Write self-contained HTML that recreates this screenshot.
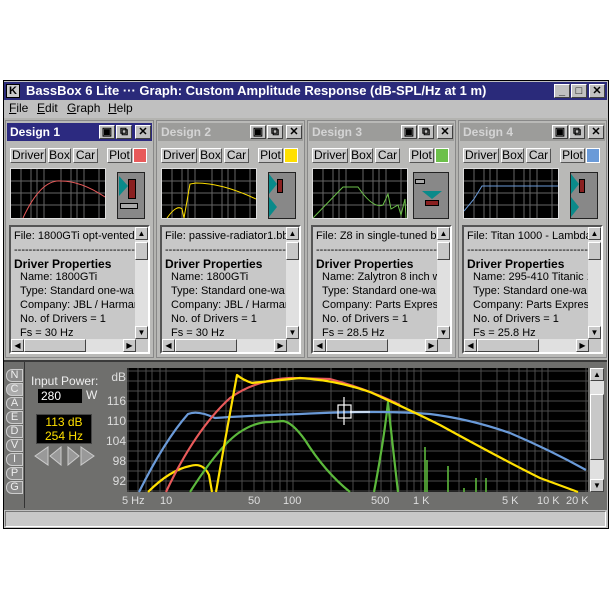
<!DOCTYPE html><html><head><style>
*{margin:0;padding:0;box-sizing:border-box}
body{width:611px;height:611px;background:#fff;position:relative;overflow:hidden;font-family:"Liberation Sans",sans-serif}
.a{position:absolute}
.win{left:3px;top:80px;width:606px;height:449px;background:#c0c0c0;border:1px solid #000}
.title{left:4px;top:82px;width:603px;height:18px;background:#2a2a7a;color:#fff;font-weight:bold;font-size:13px;line-height:18px;padding-left:22px}
.tb{width:16px;height:14px;background:#c0c0c0;border:1px solid;border-color:#fff #404040 #404040 #fff;color:#000;font-size:11px;text-align:center;line-height:12px;font-weight:bold}
.menu{top:101px;font-size:12px}
.panel{top:120px;width:149px;height:238px;background:#b9b9b7;border:1px solid #888}
.hdr{left:1px;top:2px;width:145px;height:18px;font-weight:bold;font-size:12px;line-height:18px;padding-left:3px}
.btn{top:27px;height:15px;background:#c8c8c8;border:1px solid;border-color:#fff #555 #555 #fff;font-size:12px;line-height:13px;text-align:center}
.sw{top:27px;left:127px;width:14px;height:15px;border:1px solid #fff}
.mg{left:4px;top:47px;width:96px;height:51px;background:#000;border:1px solid #ddd}
.spk{left:111px;top:51px;width:28px;height:47px;background:#888;border:1px solid #222}
.txt{left:3px;top:104px;width:141px;height:129px;background:#c8c8c8;border:2px solid;border-color:#555 #fff #fff #555;font-size:11px;overflow:hidden;white-space:nowrap}
.l{position:absolute;left:3px}
.i{left:9px}
.vs{right:0;top:0;width:13px;height:112px;background:#e0e0e0}
.hs{left:0;bottom:0;width:125px;height:13px;background:#e0e0e0}
.sb{width:13px;height:13px;background:#c8c8c8;border:1px solid;border-color:#fff #444 #444 #fff;font-size:8px;text-align:center;line-height:11px}
.lt{left:6px;width:17px;height:13px;background:#8a8a8a;border:1px solid #ccc;border-radius:6px 0 0 6px;color:#eee;font-size:11px;text-align:center;line-height:11px}
.yl{color:#ddd;font-size:12px;left:104px;width:22px;text-align:right}
.xl{color:#ddd;font-size:11px;top:495px}
</style></head><body>
<div class="a win"></div>
<div class="a title">BassBox 6 Lite ··· Graph: Custom Amplitude Response (dB-SPL/Hz at 1 m)</div>
<div class="a" style="left:6px;top:84px;width:14px;height:14px;background:#ccc;border:1px solid #000;font-size:11px;font-weight:bold;line-height:12px;text-align:center">K</div>
<div class="a tb" style="left:554px;top:84px">_</div><div class="a tb" style="left:571px;top:84px">□</div><div class="a tb" style="left:589px;top:84px">✕</div>
<div class="a menu" style="left:9px"><u>F</u>ile</div><div class="a menu" style="left:37px"><u>E</u>dit</div><div class="a menu" style="left:67px"><u>G</u>raph</div><div class="a menu" style="left:108px"><u>H</u>elp</div>
<div class="a" style="left:4px;top:118px;width:603px;height:242px;background:#b3b3b0"></div>

<div class="a panel" style="left:5px">
<div class="a hdr" style="background:#2c2a80;color:#fff">Design 1</div>
<div class="a tb" style="left:93px;top:4px">▣</div><div class="a tb" style="left:110px;top:4px">⧉</div><div class="a tb" style="left:129px;top:4px">✕</div>
<div class="a btn" style="left:4px;width:36px">Driver</div><div class="a btn" style="left:42px;width:23px">Box</div><div class="a btn" style="left:67px;width:25px">Car</div><div class="a btn" style="left:101px;width:25px">Plot</div>
<div class="a sw" style="background:#e85a5a"></div>
<div class="a mg"><svg width="94" height="49"><g stroke="#666" stroke-width="1"><path d="M0 12H94M0 24H94M0 36H94M10 0V49M20 0V49M26 0V49M33 0V49M50 0V49M60 0V49M66 0V49M73 0V49M88 0V49"/></g><path d="M12 49 Q30 10 50 12 Q70 12 94 28" stroke="#e85a5a" fill="none"/></svg></div>
<div class="a spk"><div class="a" style="left:10px;top:6px;width:8px;height:20px;background:#8a2020;border:1px solid #000"></div><div class="a" style="left:1px;top:3px;border-left:9px solid #0a8a8a;border-top:10px solid transparent;border-bottom:10px solid transparent"></div><div class="a" style="left:2px;top:30px;width:18px;height:6px;background:#aaa;border:1px solid #000"></div></div>
<div class="a txt"><div class="l" style="top:3px">File: 1800GTi opt-vented.bb6</div><div class="l" style="top:17px">---------------------------------</div><div class="l" style="top:30px;font-weight:bold;font-size:12px">Driver Properties</div><div class="l i" style="top:44px">Name: 1800GTi</div><div class="l i" style="top:58px">Type: Standard one-wa</div><div class="l i" style="top:72px">Company: JBL / Harman</div><div class="l i" style="top:86px">No. of Drivers = 1</div><div class="l i" style="top:100px">Fs =  30 Hz</div>
<div class="a vs"><div class="a sb" style="top:0">▲</div><div class="a sb" style="top:15px;height:18px"></div><div class="a sb" style="bottom:0">▼</div></div><div class="a hs"><div class="a sb" style="left:0">◀</div><div class="a sb" style="left:13px;width:62px"></div><div class="a sb" style="right:0">▶</div></div></div>
</div>

<div class="a panel" style="left:156px">
<div class="a hdr" style="background:#9c9c9a;color:#d4d4d4">Design 2</div>
<div class="a tb" style="left:93px;top:4px">▣</div><div class="a tb" style="left:110px;top:4px">⧉</div><div class="a tb" style="left:129px;top:4px">✕</div>
<div class="a btn" style="left:4px;width:36px">Driver</div><div class="a btn" style="left:42px;width:23px">Box</div><div class="a btn" style="left:67px;width:25px">Car</div><div class="a btn" style="left:101px;width:25px">Plot</div>
<div class="a sw" style="background:#ffe000"></div>
<div class="a mg"><svg width="94" height="49"><g stroke="#666"><path d="M0 12H94M0 24H94M0 36H94M10 0V49M20 0V49M26 0V49M33 0V49M50 0V49M60 0V49M66 0V49M73 0V49M88 0V49"/></g><path d="M5 49 Q15 35 20 40 L22 49 L28 15 L34 14 Q60 14 94 30" stroke="#ffe000" fill="none"/></svg></div>
<div class="a spk"><div class="a" style="left:8px;top:6px;width:6px;height:14px;background:#8a2020;border:1px solid #000"></div><div class="a" style="left:0;top:1px;border-left:8px solid #0a8a8a;border-top:10px solid transparent;border-bottom:10px solid transparent"></div><div class="a" style="left:0;top:24px;border-left:8px solid #0a8a8a;border-top:10px solid transparent;border-bottom:10px solid transparent"></div></div>
<div class="a txt"><div class="l" style="top:3px">File: passive-radiator1.bb6</div><div class="l" style="top:17px">---------------------------------</div><div class="l" style="top:30px;font-weight:bold;font-size:12px">Driver Properties</div><div class="l i" style="top:44px">Name: 1800GTi</div><div class="l i" style="top:58px">Type: Standard one-wa</div><div class="l i" style="top:72px">Company: JBL / Harman</div><div class="l i" style="top:86px">No. of Drivers = 1</div><div class="l i" style="top:100px">Fs =  30 Hz</div>
<div class="a vs"><div class="a sb" style="top:0">▲</div><div class="a sb" style="top:15px;height:18px"></div><div class="a sb" style="bottom:0">▼</div></div><div class="a hs"><div class="a sb" style="left:0">◀</div><div class="a sb" style="left:13px;width:62px"></div><div class="a sb" style="right:0">▶</div></div></div>
</div>

<div class="a panel" style="left:307px">
<div class="a hdr" style="background:#9c9c9a;color:#d4d4d4">Design 3</div>
<div class="a tb" style="left:93px;top:4px">▣</div><div class="a tb" style="left:110px;top:4px">⧉</div><div class="a tb" style="left:129px;top:4px">✕</div>
<div class="a btn" style="left:4px;width:36px">Driver</div><div class="a btn" style="left:42px;width:23px">Box</div><div class="a btn" style="left:67px;width:25px">Car</div><div class="a btn" style="left:101px;width:25px">Plot</div>
<div class="a sw" style="background:#6cc04a"></div>
<div class="a mg"><svg width="94" height="49"><g stroke="#666"><path d="M0 12H94M0 24H94M0 36H94M10 0V49M20 0V49M26 0V49M33 0V49M50 0V49M60 0V49M66 0V49M73 0V49M88 0V49"/></g><path d="M0 49 L30 18 L45 18 Q60 40 70 36 L75 25 L78 40 L85 36 L88 46 L92 30 L93 49" stroke="#6cc04a" fill="none"/></svg></div>
<div class="a spk" style="left:105px;width:36px;top:51px"><div class="a" style="left:1px;top:6px;width:10px;height:5px;background:#aaa;border:1px solid #000"></div><div class="a" style="left:8px;top:18px;border-top:8px solid #0a8a8a;border-left:10px solid transparent;border-right:10px solid transparent"></div><div class="a" style="left:11px;top:27px;width:14px;height:6px;background:#8a2020;border:1px solid #000"></div></div>
<div class="a txt"><div class="l" style="top:3px">File: Z8 in single-tuned bandp</div><div class="l" style="top:17px">---------------------------------</div><div class="l" style="top:30px;font-weight:bold;font-size:12px">Driver Properties</div><div class="l i" style="top:44px">Name: Zalytron 8 inch w</div><div class="l i" style="top:58px">Type: Standard one-wa</div><div class="l i" style="top:72px">Company: Parts Express</div><div class="l i" style="top:86px">No. of Drivers = 1</div><div class="l i" style="top:100px">Fs =  28.5 Hz</div>
<div class="a vs"><div class="a sb" style="top:0">▲</div><div class="a sb" style="top:15px;height:18px"></div><div class="a sb" style="bottom:0">▼</div></div><div class="a hs"><div class="a sb" style="left:0">◀</div><div class="a sb" style="left:13px;width:62px"></div><div class="a sb" style="right:0">▶</div></div></div>
</div>

<div class="a panel" style="left:458px">
<div class="a hdr" style="background:#9c9c9a;color:#d4d4d4">Design 4</div>
<div class="a tb" style="left:93px;top:4px">▣</div><div class="a tb" style="left:110px;top:4px">⧉</div><div class="a tb" style="left:129px;top:4px">✕</div>
<div class="a btn" style="left:4px;width:36px">Driver</div><div class="a btn" style="left:42px;width:23px">Box</div><div class="a btn" style="left:67px;width:25px">Car</div><div class="a btn" style="left:101px;width:25px">Plot</div>
<div class="a sw" style="background:#6a9ad8"></div>
<div class="a mg"><svg width="94" height="49"><g stroke="#666"><path d="M0 12H94M0 24H94M0 36H94M10 0V49M20 0V49M26 0V49M33 0V49M50 0V49M60 0V49M66 0V49M73 0V49M88 0V49"/></g><path d="M0 42 L10 30 L18 17 L40 17 L94 17" stroke="#6a9ad8" fill="none"/></svg></div>
<div class="a spk"><div class="a" style="left:8px;top:6px;width:6px;height:14px;background:#8a2020;border:1px solid #000"></div><div class="a" style="left:0;top:1px;border-left:8px solid #0a8a8a;border-top:10px solid transparent;border-bottom:10px solid transparent"></div><div class="a" style="left:0;top:24px;border-left:8px solid #0a8a8a;border-top:10px solid transparent;border-bottom:10px solid transparent"></div></div>
<div class="a txt"><div class="l" style="top:3px">File: Titan 1000 - Lambda 15I</div><div class="l" style="top:17px">---------------------------------</div><div class="l" style="top:30px;font-weight:bold;font-size:12px">Driver Properties</div><div class="l i" style="top:44px">Name: 295-410 Titanic 1</div><div class="l i" style="top:58px">Type: Standard one-wa</div><div class="l i" style="top:72px">Company: Parts Express</div><div class="l i" style="top:86px">No. of Drivers = 1</div><div class="l i" style="top:100px">Fs =  25.8 Hz</div>
<div class="a vs"><div class="a sb" style="top:0">▲</div><div class="a sb" style="top:15px;height:18px"></div><div class="a sb" style="bottom:0">▼</div></div><div class="a hs"><div class="a sb" style="left:0">◀</div><div class="a sb" style="left:13px;width:62px"></div><div class="a sb" style="right:0">▶</div></div></div>
</div>

<div class="a" style="left:4px;top:360px;width:603px;height:150px;background:#6f6f6d;border-top:2px solid #3a3a3a"></div>
<div class="a" style="left:24px;top:362px;width:1px;height:146px;background:#333"></div>
<div class="a lt" style="top:369px">N</div><div class="a lt" style="top:383px;background:#aaa">C</div><div class="a lt" style="top:397px">A</div><div class="a lt" style="top:411px">E</div><div class="a lt" style="top:425px">D</div><div class="a lt" style="top:439px">V</div><div class="a lt" style="top:453px">I</div><div class="a lt" style="top:467px">P</div><div class="a lt" style="top:481px">G</div>
<div class="a" style="left:31px;top:374px;color:#eee;font-size:12px">Input Power:</div>
<div class="a" style="left:38px;top:389px;width:44px;height:14px;background:#000;color:#fff;font-size:12px;line-height:14px;padding-left:3px">280</div>
<div class="a" style="left:86px;top:388px;color:#eee;font-size:12px">W</div>
<div class="a" style="left:36px;top:414px;width:56px;height:30px;background:#000;border:1px solid #444;color:#ffe000;font-size:12px;text-align:center;line-height:14px">113 dB<br>254 Hz</div>
<svg class="a" style="left:33px;top:446px" width="64" height="20"><path d="M2 10L15 1V19Z M17 10L28 1V19Z" fill="#999" stroke="#ccc"/><path d="M35 1L46 10L35 19Z M48 1L61 10L48 19Z" fill="#999" stroke="#ccc"/></svg>
<div class="a yl" style="top:370px">dB</div><div class="a yl" style="top:394px">116</div><div class="a yl" style="top:414px">110</div><div class="a yl" style="top:434px">104</div><div class="a yl" style="top:454px">98</div><div class="a yl" style="top:474px">92</div>
<div class="a xl" style="left:122px">5 Hz</div><div class="a xl" style="left:160px">10</div><div class="a xl" style="left:248px">50</div><div class="a xl" style="left:283px">100</div><div class="a xl" style="left:371px">500</div><div class="a xl" style="left:413px">1 K</div><div class="a xl" style="left:502px">5 K</div><div class="a xl" style="left:537px">10 K</div><div class="a xl" style="left:566px">20 K</div>
<div class="a" style="left:590px;top:368px;width:14px;height:124px;background:#e0e0e0"><div class="a sb" style="top:0;width:14px">▲</div><div class="a sb" style="top:26px;width:14px;height:66px"></div><div class="a sb" style="bottom:0;width:14px">▼</div></div>
<svg class="a" style="left:0;top:0" width="611" height="611">
<rect x="127" y="368" width="461" height="124" fill="#000"/>
<g stroke="#4a4a4a" stroke-width="1">
<path d="M127 371H588M127 381H588M127 391H588M127 401H588M127 411H588M127 421H588M127 431H588M127 441H588M127 451H588M127 461H588M127 471H588M127 481H588M127 491H588"/>
<path d="M128 368V492M138 368V492M146 368V492M152 368V492M160 368V492M166 368V492M204 368V492M226 368V492M242 368V492M254 368V492M264 368V492M272 368V492M280 368V492M287 368V492M293 368V492M331 368V492M353 368V492M369 368V492M381 368V492M391 368V492M399 368V492M407 368V492M414 368V492M421 368V492M459 368V492M481 368V492M497 368V492M509 368V492M519 368V492M527 368V492M535 368V492M542 368V492M548 368V492M586 368V492"/>
</g>
<g fill="none" stroke-width="2.2" stroke-linejoin="round">
<path d="M148 492 Q170 470 190 466 Q203 462 209 475 L212 492" stroke="#ffe000"/>
<path d="M190 492 Q220 445 240 432 Q255 422 270 422 L283 421 Q292 422 305 440 Q325 472 350 492" stroke="#5cb83c"/>
<path d="M374 492 Q384 440 388 402 Q392 440 398 492" stroke="#5cb83c"/>
<path d="M425 492V447M427 492V460 M448 492V466 M464 492V488 M476 492V478 M486 492V478" stroke="#5cb83c" stroke-width="1.6"/>
<path d="M139 492 Q165 440 188 414 Q198 410 215 418 Q240 416 300 414 Q380 410 430 414 Q470 419 510 433 Q550 450 586 470" stroke="#6a9ad8"/>
<path d="M166 492 Q195 430 230 398 Q255 380 290 378 L330 379 Q370 390 400 405" stroke="#e85a5a"/>
<path d="M216 492 Q225 440 237 375 Q243 380 252 383 L300 378 Q335 380 370 392 Q410 410 440 425 Q500 458 540 478 L578 492" stroke="#ffe000"/>
</g>
<g stroke="#fff" stroke-width="1.2" fill="none"><rect x="338" y="405" width="13" height="13"/><path d="M344 397V425M350 412H370"/></g>
</svg>
<div class="a" style="left:5px;top:511px;width:601px;height:16px;background:#c8c8c8;border:1px solid;border-color:#777 #fff #fff #777"></div>
</body></html>
